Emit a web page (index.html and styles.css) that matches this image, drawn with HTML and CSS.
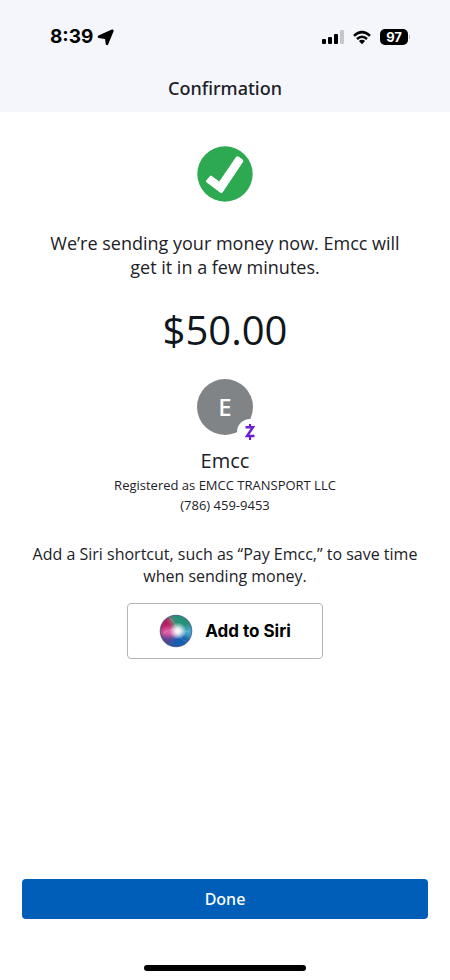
FILE: index.html
```html
<!DOCTYPE html>
<html lang="en">
<head>
<meta charset="utf-8">
<meta name="viewport" content="width=device-width, initial-scale=1">
<title>Confirmation</title>
<link rel="stylesheet" href="styles.css">
</head>
<body>
<header class="header">
  <div class="status">
    <div class="status-group">
      <span class="time">8:39</span>
      <svg width="17" height="17" viewBox="0 0 17 17" aria-hidden="true"><path d="M15.4 1.8 L10 14.8 L9.2 8.9 L2 7.8 Z" fill="#000" stroke="#000" stroke-width="2.6" stroke-linejoin="round"/></svg>
    </div>
    <div class="status-group status-icons">
      <svg width="23" height="16" viewBox="0 0 23 16" aria-hidden="true"><rect x="1" y="10" width="4" height="5" rx="1"/><rect x="7" y="8" width="4" height="7" rx="1"/><rect x="13" y="5" width="4" height="10" rx="1"/><rect x="19" y="1" width="4" height="14" rx="1" fill="#c6c7ca"/></svg>
      <svg width="20" height="15" viewBox="0 0 20 15" aria-hidden="true"><path d="M2 5.8 Q10 -1.6 18 5.8 M5 9 Q10 4.4 15 9" fill="none" stroke="#000" stroke-width="2.5"/><path d="M6.9 11 Q10 8.3 13.1 11 L10 14.2 Z"/></svg>
      <span class="battery">97</span>
    </div>
  </div>
  <h1 class="title">Confirmation</h1>
</header>
<main class="content">
  <svg width="56" height="56" viewBox="0 0 56 56" role="img" aria-label="Success"><circle cx="28" cy="28" r="27.7" fill="#2da952"/><path d="M9.4 34.2 L12.8 30.2 Q13.7 29.1 14.8 30 L22.3 35.5 L39 11 Q40 9.7 41.4 10.6 L45.6 13.5 Q47 14.5 46 15.9 L25.9 46.1 Q24.8 47.7 23.1 46.5 L9.7 36.6 Q8.3 35.5 9.4 34.2 Z" fill="#fff"/></svg>
  <p class="message">We’re sending your money now. Emcc will get it in a few minutes.</p>
  <p class="amount">$50.00</p>
  <div class="avatar">E
    <span class="badge"><svg width="12" height="18" viewBox="0 0 12 18" role="img" aria-label="Zelle"><path d="M1.5 4.3 H9 L3 13 H10.5" fill="none" stroke="#6d1ed4" stroke-width="2.4"/><path d="M6 1 V4 M6 13.5 V17" stroke="#6d1ed4" stroke-width="2.2"/></svg></span>
  </div>
  <h2 class="name">Emcc</h2>
  <p class="detail">Registered as EMCC TRANSPORT LLC</p>
  <p class="detail">(786) 459-9453</p>
  <p class="hint">Add a Siri shortcut, such as “Pay Emcc,” to save time when sending money.</p>
  <button class="siri" type="button">
    <svg width="34" height="34" viewBox="0 0 34 34" aria-hidden="true">
      <defs>
        <clipPath id="orb"><circle cx="17" cy="17" r="15.5"/></clipPath>
        <filter id="soft" x="-50%" y="-50%" width="200%" height="200%"><feGaussianBlur stdDeviation="2"/></filter>
        <radialGradient id="glow"><stop offset="0" stop-color="#fff"/><stop offset=".35" stop-color="#fff" stop-opacity=".8"/><stop offset="1" stop-color="#fff" stop-opacity="0"/></radialGradient>
      </defs>
      <circle cx="17" cy="17" r="16.3" fill="#77718a"/>
      <g clip-path="url(#orb)">
        <rect width="34" height="34" fill="#245f98"/>
        <g filter="url(#soft)">
          <path d="M17 17 L10 0 H0 V25 Z" fill="#b51f64"/>
          <path d="M17 17 L9 0 H34 V13 Z" fill="#259078"/>
          <path d="M17 17 L34 12 V26 Z" fill="#46a9cf"/>
          <path d="M17 17 L34 25 V34 H10 Z" fill="#185fae"/>
          <path d="M17 17 L0 23 L9 34 Z" fill="#594292"/>
          <ellipse cx="10" cy="18" rx="8" ry="4" fill="#e55fa9"/>
        </g>
        <path d="M11 4 Q16 8 19 17 Q25 19 31 17 M4 20 Q12 13 19 17 Q20 25 28 28" fill="none" stroke="#d8effa" stroke-width=".7" opacity=".3"/>
        <circle cx="19" cy="17" r="8.5" fill="url(#glow)"/>
      </g>
    </svg>
    <span>Add to Siri</span>
  </button>
</main>
<footer class="footer">
  <button class="done" type="button">Done</button>
  <div class="home"></div>
</footer>
</body>
</html>
```
FILE: styles.css
```css
* { box-sizing: border-box; }
body {
  margin: 0;
  min-height: 100vh;
  display: flex;
  flex-direction: column;
  background: #fff;
  color: #1c2127;
  font-family: "Open Sans", "Noto Sans", sans-serif;
  text-align: center;
}
h1, h2, p { margin: 0; font-weight: 400; }
svg { display: block; flex: none; }
button { cursor: pointer; }
.header { background: #f4f6fb; padding: 24px 40px 12px 50px; }
.status { display: flex; justify-content: space-between; align-items: center; height: 26px; color: #000; }
.status-group { display: flex; align-items: center; gap: 4px; }
.status-icons { gap: 8px; padding-right: 2px; }
.time { font: 700 19px/24px Inter, sans-serif; }
.battery {
  position: relative;
  width: 28px;
  border-radius: 5px;
  background: #000;
  color: #fff;
  font: 700 13px/16px Inter, sans-serif;
}
.battery::after {
  content: "";
  position: absolute;
  left: 29px;
  top: 6px;
  width: 1px;
  height: 4px;
  background: #b4b5b8;
}
.title, .avatar, .done { font-family: "Noto Sans", sans-serif; font-weight: 500; }
.title { margin: 26px 10px 0 0; font-size: 18px; line-height: 24px; }
.content {
  flex: 1;
  display: flex;
  flex-direction: column;
  align-items: center;
  padding: 34px 32px 24px;
}
.message { max-width: 360px; margin-top: 29px; font-size: 18px; line-height: 24px; }
.amount { margin-top: 27px; font-size: 40px; line-height: 48px; color: #0f161d; }
.avatar {
  position: relative;
  width: 56px;
  height: 56px;
  margin-top: 25px;
  border-radius: 50%;
  background: #808487;
  color: #fff;
  font-size: 24px;
  line-height: 56px;
}
.badge {
  position: absolute;
  left: 40px;
  top: 40px;
  width: 26px;
  height: 26px;
  display: grid;
  place-items: center;
  border-radius: 50%;
  background: #fff;
}
.name { margin-top: 12px; font-size: 20px; line-height: 28px; }
.detail { font-size: 13px; line-height: 20px; }
.hint { margin-top: 28px; font-size: 16px; line-height: 22px; }
.siri {
  display: flex;
  align-items: center;
  gap: 12px;
  height: 56px;
  margin-top: 16px;
  padding: 0 31px;
  border: 1px solid #b5b5b5;
  border-radius: 4px;
  background: #fff;
  color: #000;
  font: 700 17px/24px Inter, sans-serif;
}
.footer { padding: 0 22px 9px; }
.done {
  display: block;
  width: 100%;
  height: 40px;
  border: 0;
  border-radius: 4px;
  background: #005eb8;
  color: #fff;
  font-size: 16px;
}
.home { width: 162px; height: 6px; margin: 46px auto 0; border-radius: 3px; background: #000; }
```
